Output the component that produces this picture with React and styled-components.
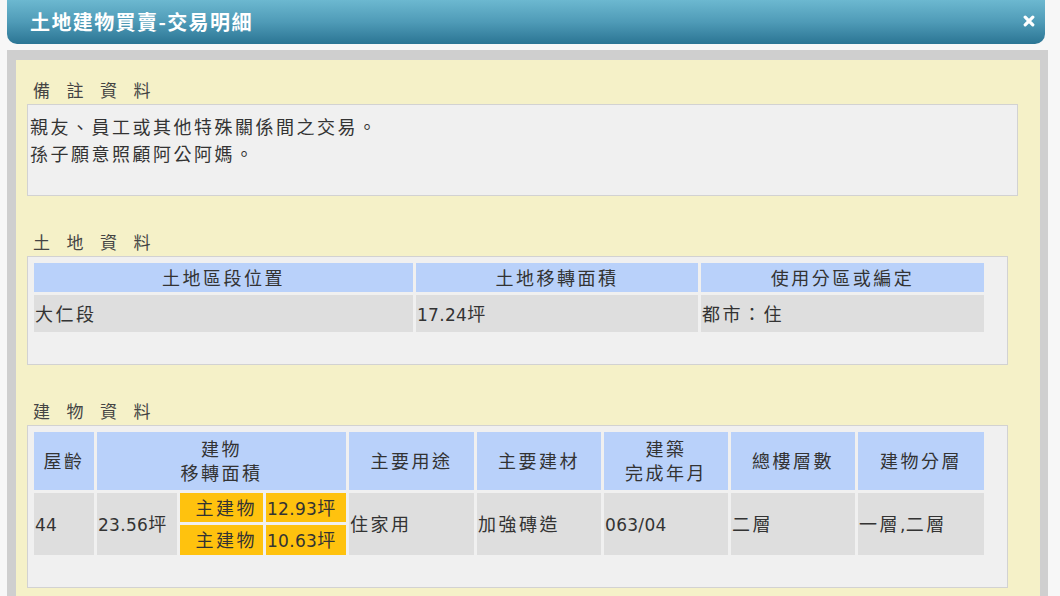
import React from 'react';
import styled, { createGlobalStyle } from 'styled-components';

const colors = {
  page: '#f7f7f7',
  frame: '#cfcfcf',
  panel: '#f5f1c8',
  box: '#f0f0f0',
  boxBorder: '#d2d2d2',
  head: '#b9d1fa',
  cell: '#dedede',
  mark: '#ffc20e',
  text: '#333333',
};

const GlobalStyle = createGlobalStyle`
  html, body {
    margin: 0;
    padding: 0;
    background: ${colors.page};
  }
  body {
    font-family: "DejaVu Sans", "Noto Sans CJK TC", sans-serif;
    color: ${colors.text};
  }
`;

const Page = styled.div`
  width: 1060px;
  height: 596px;
  overflow: hidden;
  box-sizing: border-box;
  padding: 0 12px 0 7px;
`;

const TitleBar = styled.div`
  height: 44px;
  margin-right: 3px;
  border-radius: 0 0 10px 10px;
  background: linear-gradient(to bottom, #6cb8d0 0%, #4f9bb7 50%, #2b7594 100%);
  display: flex;
  align-items: center;
  justify-content: space-between;
  padding: 0 10px 2px 23px;
  box-sizing: border-box;

  .title__text {
    font-family: "Noto Sans CJK TC", sans-serif;
    font-weight: 700;
    font-size: 20px;
    letter-spacing: 1.4px;
    color: #ffffff;
  }

  .title__close {
    width: 12px;
    height: 12px;
    display: block;
  }
`;

const Frame = styled.div`
  margin-top: 6px;
  background: ${colors.frame};
  padding: 10px 8px 0 9px;
`;

const Panel = styled.div`
  background: ${colors.panel};
  padding: 20px 22px 40px 11px;
`;

const Section = styled.section`
  & + & {
    margin-top: 36px;
  }
`;

const Heading = styled.h3`
  margin: 0 0 4px;
  padding-left: 6px;
  height: 20px;
  line-height: 20px;
  font-family: "Noto Sans CJK TC", sans-serif;
  font-weight: 400;
  font-size: 17px;
  letter-spacing: 16.5px;
  color: #444;
`;

const Box = styled.div`
  background: ${colors.box};
  border: 1px solid ${colors.boxBorder};
  box-sizing: border-box;
  margin-right: ${(p) => (p.$narrow ? '10px' : '0')};
  padding: ${(p) => (p.$narrow ? '3px 19px 29px 3px' : '9px 2px 0')};
  height: ${(p) => p.$h || 'auto'};
`;

const NoteLine = styled.p`
  margin: 0;
  font-size: 18px;
  line-height: 27px;
  letter-spacing: 2.5px;
`;

const Table = styled.table`
  width: 956px;
  table-layout: fixed;
  border-collapse: separate;
  border-spacing: 3px;
  font-size: 18px;
  letter-spacing: 2.5px;
`;

const Col = styled.col`
  width: ${(p) => p.$w}px;
`;

const Th = styled.th`
  background: ${colors.head};
  font-weight: 400;
  text-align: center;
  vertical-align: middle;
  padding: 2px 0 0;
  height: ${(p) => p.$h - 2}px;
  line-height: ${(p) => p.$lh || 24}px;
  color: ${colors.text};
`;

const Td = styled.td`
  background: ${(p) => (p.$mark ? colors.mark : colors.cell)};
  text-align: ${(p) => (p.$right ? 'right' : 'left')};
  vertical-align: middle;
  padding: ${(p) => (p.$right ? '2px 6px 0 0' : '2px 1px 0')};
  height: ${(p) => (p.$h ? `${p.$h - 2}px` : 'auto')};
  line-height: 24px;
  white-space: nowrap;
  color: ${colors.text};
`;

const Num = styled.span`
  font-family: "DejaVu Sans", sans-serif;
  font-size: 17px;
  letter-spacing: 0.3px;
`;

const CloseIcon = () => (
  <svg className='title__close' viewBox='0 0 12 12'>
    <path d='M2.2 2.2 L9.8 9.8 M9.8 2.2 L2.2 9.8' stroke='#ffffff' strokeWidth='3.2' strokeLinecap='round' />
  </svg>
);

const App = () => {
  return (
    <>
      <GlobalStyle />
      <Page>
        <TitleBar>
          <span className='title__text'>土地建物買賣-交易明細</span>
          <CloseIcon />
        </TitleBar>
        <Frame>
          <Panel>
            <Section>
              <Heading>備註資料</Heading>
              <Box $h='92px'>
                <NoteLine>親友、員工或其他特殊關係間之交易。</NoteLine>
                <NoteLine>孫子願意照顧阿公阿媽。</NoteLine>
              </Box>
            </Section>

            <Section>
              <Heading>土地資料</Heading>
              <Box $narrow>
                <Table>
                  <colgroup>
                    <Col $w={379} />
                    <Col $w={282} />
                    <Col $w={283} />
                  </colgroup>
                  <thead>
                    <tr>
                      <Th $h={29} $lh={27}>土地區段位置</Th>
                      <Th $h={29} $lh={27}>土地移轉面積</Th>
                      <Th $h={29} $lh={27}>使用分區或編定</Th>
                    </tr>
                  </thead>
                  <tbody>
                    <tr>
                      <Td $h={37}>大仁段</Td>
                      <Td $h={37}><Num>17.24</Num>坪</Td>
                      <Td $h={37}>都市：住</Td>
                    </tr>
                  </tbody>
                </Table>
              </Box>
            </Section>

            <Section>
              <Heading>建物資料</Heading>
              <Box $narrow>
                <Table>
                  <colgroup>
                    <Col $w={60} />
                    <Col $w={80} />
                    <Col $w={83} />
                    <Col $w={80} />
                    <Col $w={125} />
                    <Col $w={124} />
                    <Col $w={124} />
                    <Col $w={124} />
                    <Col $w={126} />
                  </colgroup>
                  <thead>
                    <tr>
                      <Th $h={58}>屋齡</Th>
                      <Th $h={58} colSpan={3}>建物<br />移轉面積</Th>
                      <Th $h={58}>主要用途</Th>
                      <Th $h={58}>主要建材</Th>
                      <Th $h={58}>建築<br />完成年月</Th>
                      <Th $h={58}>總樓層數</Th>
                      <Th $h={58}>建物分層</Th>
                    </tr>
                  </thead>
                  <tbody>
                    <tr>
                      <Td rowSpan={2}><Num>44</Num></Td>
                      <Td rowSpan={2}><Num>23.56</Num>坪</Td>
                      <Td $mark $right $h={29}>主建物</Td>
                      <Td $mark $h={29}><Num>12.93</Num>坪</Td>
                      <Td rowSpan={2}>住家用</Td>
                      <Td rowSpan={2}>加強磚造</Td>
                      <Td rowSpan={2}><Num>063/04</Num></Td>
                      <Td rowSpan={2}>二層</Td>
                      <Td rowSpan={2}>一層<Num>,</Num>二層</Td>
                    </tr>
                    <tr>
                      <Td $mark $right $h={30}>主建物</Td>
                      <Td $mark $h={30}><Num>10.63</Num>坪</Td>
                    </tr>
                  </tbody>
                </Table>
              </Box>
            </Section>
          </Panel>
        </Frame>
      </Page>
    </>
  );
};

export default App;
